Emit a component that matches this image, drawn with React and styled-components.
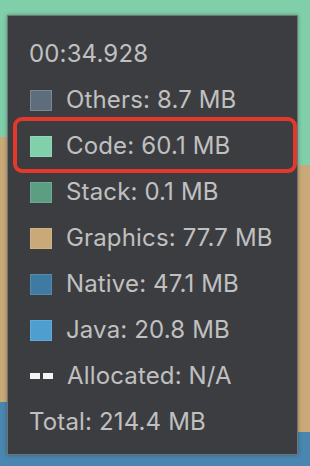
import React from "react";
import styled, { createGlobalStyle } from "styled-components";

const GlobalStyle = createGlobalStyle`
  html, body {
    margin: 0;
    padding: 0;
    background: #4a86b0;
  }
  * {
    box-sizing: border-box;
  }
`;

const legend = [
  { label: "Others: 8.7 MB", color: "#5e6d7b", edge: "#7b8995" },
  { label: "Code: 60.1 MB", color: "#80d0ac", highlight: true },
  { label: "Stack: 0.1 MB", color: "#5b9e82" },
  { label: "Graphics: 77.7 MB", color: "#c9a978" },
  { label: "Native: 47.1 MB", color: "#3e7aa1" },
  { label: "Java: 20.8 MB", color: "#4e9fcf" },
];

const MemoryChart = () => (
  <ChartLayer viewBox="0 0 310 466" preserveAspectRatio="none">
    <rect x="0" y="0" width="310" height="466" fill="#4a86b0" />
    <polygon points="0,0 310,0 310,432 150,432 150,402 0,402" fill="#c9a978" />
    <polygon points="0,0 310,0 310,165 150,165 150,137 0,137" fill="#7fcfab" />
  </ChartLayer>
);

const App = () => {
  return (
    <>
      <GlobalStyle />
      <Stage>
        <MemoryChart />
        <Tooltip>
          <Row>
            <Text>00:34.928</Text>
          </Row>
          {legend.map((item) => (
            <Row key={item.label}>
              {item.highlight && <Highlight />}
              <Swatch $color={item.color} $edge={item.edge} />
              <Text>{item.label}</Text>
            </Row>
          ))}
          <Row>
            <Dashes>
              <Dash />
              <Dash />
            </Dashes>
            <Text>Allocated: N/A</Text>
          </Row>
          <Row>
            <Text>Total: 214.4 MB</Text>
          </Row>
        </Tooltip>
      </Stage>
    </>
  );
};

export default App;

const Stage = styled.div`
  position: relative;
  width: 310px;
  height: 466px;
  overflow: hidden;
  padding: 15px 12px 0 7px;
  font-family: "Inter", "Liberation Sans", sans-serif;
`;

const ChartLayer = styled.svg`
  position: absolute;
  inset: 0;
  width: 100%;
  height: 100%;
  display: block;
`;

const Tooltip = styled.div`
  position: relative;
  width: 291px;
  height: 440px;
  background: #3c3d40;
  border: 1px solid rgba(255, 255, 255, 0.28);
  box-shadow: 0 0 4px rgba(0, 0, 0, 0.3);
  padding: 15px 21px 0 21px;
  display: flex;
  flex-direction: column;
`;

const Row = styled.div`
  position: relative;
  height: 46px;
  display: flex;
  align-items: center;
  gap: 14px;
`;

const Text = styled.span`
  color: #c0c0c0;
  font-size: 24px;
  line-height: 1;
  letter-spacing: 0.15px;
  white-space: nowrap;
`;

const Swatch = styled.span`
  flex: none;
  width: 22px;
  height: 21px;
  margin-left: 1px;
  background: ${({ $color }) => $color};
  border: 1px solid ${({ $edge }) => $edge || "rgba(255, 255, 255, 0.12)"};
`;

const Dashes = styled.span`
  flex: none;
  display: flex;
  gap: 3px;
  width: 23px;
  margin-left: 1px;
`;

const Dash = styled.span`
  width: 10px;
  height: 6px;
  background: #f4f4f4;
`;

const Highlight = styled.span`
  position: absolute;
  top: -6px;
  bottom: -4px;
  left: -16px;
  right: -21px;
  border: 4px solid #e5382c;
  border-radius: 9px;
  pointer-events: none;
`;
